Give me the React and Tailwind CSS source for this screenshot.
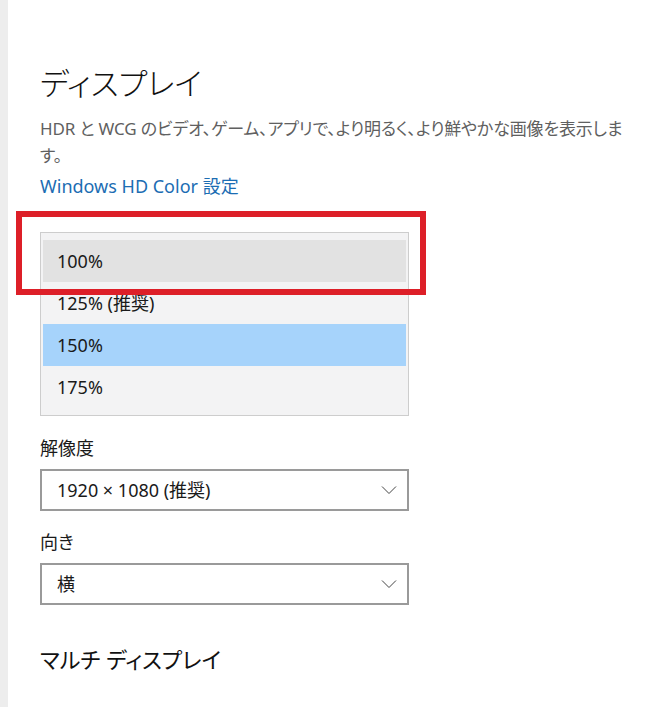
import React from "react";

const font = "font-['Noto_Sans','Noto_Sans_CJK_JP',sans-serif] [font-feature-settings:'palt']";

function Chevron() {
  return (
    <svg width="16" height="10" viewBox="0 0 16 10" fill="none">
      <path d="M1 1.5 L8 8.5 L15 1.5" stroke="#444" strokeWidth="1" />
    </svg>
  );
}

function Select({ value }) {
  return (
    <div className="flex h-[42px] w-[369px] items-center justify-between border-2 border-[#9a9a9a] bg-white pl-[15px] pr-[10px] text-[18px] text-[#1a1a1a]">
      <span>{value}</span>
      <Chevron />
    </div>
  );
}

export default function App() {
  const items = ["100%", "125% (推奨)", "150%", "175%"];
  return (
    <div className={`flex h-[707px] w-[650px] bg-white ${font}`}>
      <div className="w-[8px] shrink-0 bg-[#ededed]" />
      <div className="relative flex flex-col pl-[32px]">
        <h1 className="mt-[61px] h-[44px] text-[31px] font-light leading-[44px] text-[#111]">ディスプレイ</h1>
        <p className="mt-[10px] whitespace-nowrap text-[17px] leading-[27px] tracking-[-0.15px] text-[#606060]">
          HDR と WCG のビデオ、ゲーム、アプリで、より明るく、より鮮やかな画像を表示しま
          <br />
          す。
        </p>
        <a className="mt-[2px] text-[18px] leading-[30px] text-[#1c6db3]">Windows HD Color 設定</a>

        <div className="mt-[31px] w-[369px] border border-[#cdcdcd] bg-[#f3f3f4] px-[2px] py-[7px]">
          {items.map((t, i) => (
            <div
              key={t}
              className={`flex h-[42px] items-center pl-[14px] text-[18px] text-[#1a1a1a] ${
                i === 0 ? "bg-[#e2e2e2]" : i === 2 ? "bg-[#a6d3fb]" : ""
              }`}
            >
              {t}
            </div>
          ))}
        </div>

        <div className="mt-[19px] text-[18px] leading-[26px] text-[#1a1a1a]">解像度</div>
        <div className="mt-[8px]">
          <Select value="1920 × 1080 (推奨)" />
        </div>
        <div className="mt-[18px] text-[18px] leading-[26px] text-[#1a1a1a]">向き</div>
        <div className="mt-[8px]">
          <Select value="横" />
        </div>
        <h2 className="mt-[37px] text-[22px] leading-[34px] text-[#111]">マルチ ディスプレイ</h2>

        <div className="pointer-events-none absolute left-[8px] top-[211px] h-[84px] w-[410px] border-[6px] border-[#dd1f28]" />
      </div>
    </div>
  );
}
